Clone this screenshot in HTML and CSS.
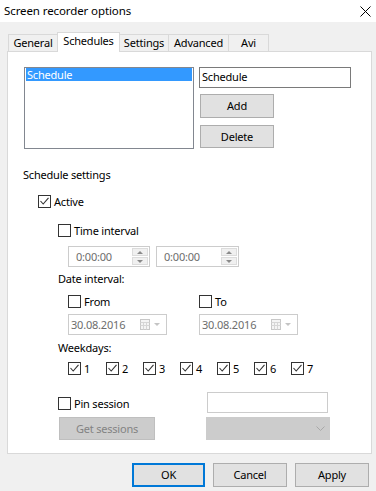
FILE: index.html
```html
<!DOCTYPE html>
<html>
<head>
<meta charset="utf-8">
<link rel="stylesheet" href="styles.css">
</head>
<body>
<div class="window">
  <div class="titlebar">
    <span class="title">Screen recorder options</span>
    <svg class="close" width="11" height="11" viewBox="0 0 11 11"><path d="M0.5 0.5 L10.5 10.5 M10.5 0.5 L0.5 10.5" stroke="#000" stroke-width="1" fill="none"/></svg>
  </div>

  <div class="tabs">
    <div class="tab t-general">General</div>
    <div class="tab active t-sched">Schedules</div>
    <div class="tab t-settings">Settings</div>
    <div class="tab t-adv">Advanced</div>
    <div class="tab t-avi">Avi</div>
  </div>

  <div class="panel">
    <div class="top">
      <div class="listbox"><div class="item sel">Schedule</div></div>
      <div class="side">
        <div class="textbox">Schedule</div>
        <div class="btn add">Add</div>
        <div class="btn del">Delete</div>
      </div>
    </div>

    <div class="label l-sched">Schedule settings</div>

    <div class="crow r-active">
      <span class="cb"><svg width="11" height="11" viewBox="0 0 11 11"><polyline points="1.5,5 4.2,8 9.5,1.8" fill="none" stroke="#333" stroke-width="1.1"/></svg></span>
      <span class="ctext">Active</span>
    </div>

    <div class="crow r-time">
      <span class="cb"></span>
      <span class="ctext">Time interval</span>
    </div>

    <div class="row r-spin">
      <div class="spin s1"><span class="val">0:00:00</span><span class="spbtns"><span class="spb up"></span><span class="spb dn"></span></span></div>
      <div class="spin s2"><span class="val">0:00:00</span><span class="spbtns"><span class="spb up"></span><span class="spb dn"></span></span></div>
    </div>

    <div class="label l-sub l-date">Date interval:</div>

    <div class="row r-fromto">
      <div class="crow-in w-from"><span class="cb"></span><span class="ctext">From</span></div>
      <div class="crow-in"><span class="cb"></span><span class="ctext">To</span></div>
    </div>

    <div class="row r-dates">
      <div class="date d1"><span class="val">30.08.2016</span><svg class="cal" width="22" height="12" viewBox="0 0 22 12"><rect x="0.5" y="0.5" width="9" height="10" fill="#f4f4f4" stroke="#c8c8c8"/><path d="M0.5 3.5 H9.5 M3.5 3.5 V10.5 M6.5 3.5 V10.5 M0.5 6.5 H9.5" stroke="#d6d6d6" fill="none"/><path d="M14 4 L20 4 L17 7 Z" fill="#c4c4c4"/></svg></div>
      <div class="date d2"><span class="val">30.08.2016</span><svg class="cal" width="22" height="12" viewBox="0 0 22 12"><rect x="0.5" y="0.5" width="9" height="10" fill="#f4f4f4" stroke="#c8c8c8"/><path d="M0.5 3.5 H9.5 M3.5 3.5 V10.5 M6.5 3.5 V10.5 M0.5 6.5 H9.5" stroke="#d6d6d6" fill="none"/><path d="M14 4 L20 4 L17 7 Z" fill="#c4c4c4"/></svg></div>
    </div>

    <div class="label l-sub l-week">Weekdays:</div>

    <div class="row r-week">
      <div class="wd"><span class="cb"><svg width="11" height="11" viewBox="0 0 11 11"><polyline points="1.5,5 4.2,8 9.5,1.8" fill="none" stroke="#333" stroke-width="1.1"/></svg></span><span class="ctext">1</span></div>
      <div class="wd"><span class="cb"><svg width="11" height="11" viewBox="0 0 11 11"><polyline points="1.5,5 4.2,8 9.5,1.8" fill="none" stroke="#333" stroke-width="1.1"/></svg></span><span class="ctext">2</span></div>
      <div class="wd"><span class="cb"><svg width="11" height="11" viewBox="0 0 11 11"><polyline points="1.5,5 4.2,8 9.5,1.8" fill="none" stroke="#333" stroke-width="1.1"/></svg></span><span class="ctext">3</span></div>
      <div class="wd"><span class="cb"><svg width="11" height="11" viewBox="0 0 11 11"><polyline points="1.5,5 4.2,8 9.5,1.8" fill="none" stroke="#333" stroke-width="1.1"/></svg></span><span class="ctext">4</span></div>
      <div class="wd"><span class="cb"><svg width="11" height="11" viewBox="0 0 11 11"><polyline points="1.5,5 4.2,8 9.5,1.8" fill="none" stroke="#333" stroke-width="1.1"/></svg></span><span class="ctext">5</span></div>
      <div class="wd"><span class="cb"><svg width="11" height="11" viewBox="0 0 11 11"><polyline points="1.5,5 4.2,8 9.5,1.8" fill="none" stroke="#333" stroke-width="1.1"/></svg></span><span class="ctext">6</span></div>
      <div class="wd"><span class="cb"><svg width="11" height="11" viewBox="0 0 11 11"><polyline points="1.5,5 4.2,8 9.5,1.8" fill="none" stroke="#333" stroke-width="1.1"/></svg></span><span class="ctext">7</span></div>
    </div>

    <div class="row r-pin">
      <div class="crow-in w-pin"><span class="cb"></span><span class="ctext">Pin session</span></div>
      <div class="pinbox"></div>
    </div>

    <div class="row r-get">
      <div class="btn disabled getbtn">Get sessions</div>
      <div class="combo"><svg width="9" height="6" viewBox="0 0 9 6"><polyline points="0.5,0.5 4.5,4.5 8.5,0.5" fill="none" stroke="#a8a8a8" stroke-width="1"/></svg></div>
    </div>
  </div>

  <div class="footer">
    <div class="btn fbtn default">OK</div>
    <div class="btn fbtn">Cancel</div>
    <div class="btn fbtn">Apply</div>
  </div>
</div>
</body>
</html>
```

FILE: styles.css
```css
* { box-sizing: border-box; }
html, body { margin: 0; padding: 0; }
body {
  width: 376px;
  height: 491px;
  background: #f0f0f0;
  font-family: "Noto Sans", "Open Sans", sans-serif;
  font-size: 11px;
  letter-spacing: -0.2px;
  color: #000;
  overflow: hidden;
}
.window { width: 376px; height: 491px; }

.titlebar {
  height: 22px;
  background: #fff;
  display: flex;
  align-items: center;
  justify-content: space-between;
  padding: 0 5px 0 4px;
}
.title { font-size: 11.5px; letter-spacing: -0.1px; line-height: 16px; }
.close { display: block; margin-top: 1px; }

.tabs {
  display: flex;
  align-items: flex-end;
  height: 20px;
  margin: 10px 0 -1px 8px;
  position: relative;
  z-index: 1;
}
.tab {
  height: 17px;
  margin-bottom: 1px;
  border-top: 1px solid #d9d9d9;
  border-right: 1px solid #d9d9d9;
  background: #f0f0f0;
  display: flex;
  align-items: center;
  justify-content: center;
  line-height: 14px;
}
.t-general { width: 50px; border-left: 1px solid #d9d9d9; }
.tab.active {
  height: 20px;
  margin-bottom: 0;
  margin-left: -1px;
  background: #fff;
  border-left: 1px solid #d9d9d9;
  padding-bottom: 3px;
}
.t-sched { width: 63px; }
.t-settings { width: 49px; }
.t-adv { width: 60px; }
.t-avi { width: 40px; }

.panel {
  margin-left: 7px;
  width: 365px;
  height: 403px;
  background: #fff;
  border: 1px solid #d9d9d9;
}

.top { display: flex; margin: 15px 0 0 16px; }
.listbox {
  width: 170px;
  height: 82px;
  border: 1px solid #828790;
  padding: 0 1px;
  background: #fff;
}
.item { height: 13px; line-height: 13px; padding-left: 1px; }
.item.sel { background: #3399ff; color: #fff; }
.side { margin-left: 5px; display: flex; flex-direction: column; align-items: flex-start; }
.textbox {
  width: 152px;
  height: 21px;
  border: 1px solid #7a7a7a;
  padding-left: 2px;
  line-height: 18px;
}
.btn {
  background: #e1e1e1;
  border: 1px solid #adadad;
  display: flex;
  align-items: center;
  justify-content: center;
  line-height: 14px;
}
.add { margin: 6px 0 0 1px; width: 74px; height: 24px; }
.del { margin: 7px 0 0 1px; width: 74px; height: 23px; }

.label { line-height: 16px; height: 16px; }
.l-sched { margin: 18px 0 0 15px; }
.l-sub { margin-left: 50px; }
.l-date { margin-top: 4px; }
.l-week { margin-top: 5px; }

.cb {
  width: 13px;
  height: 13px;
  border: 1px solid #333;
  background: #fff;
  display: flex;
  align-items: center;
  justify-content: center;
  flex: none;
}
.cb svg { display: block; }
.ctext { margin-left: 3px; line-height: 13px; }
.crow, .crow-in, .wd { display: flex; align-items: center; height: 13px; }
.r-active { margin: 12px 0 0 30px; }
.r-time { margin: 16px 0 0 50px; }

.row { display: flex; }
.r-spin { margin: 9px 0 0 60px; gap: 6px; }
.spin, .date {
  height: 21px;
  border: 1px solid #cccccc;
  display: flex;
  align-items: center;
  color: #6d6d6d;
  background: #fff;
}
.spin .val { margin-left: 7px; }
.s1 { width: 82px; }
.s2 { width: 83px; }
.spbtns {
  margin-left: auto;
  margin-right: 1px;
  width: 16px;
  display: flex;
  flex-direction: column;
  gap: 1px;
}
.spb {
  height: 8px;
  background: #f0f0f0;
  border: 1px solid #dcdcdc;
  display: flex;
  align-items: center;
  justify-content: center;
}
.spb::after {
  content: "";
  width: 0; height: 0;
  border-left: 3px solid transparent;
  border-right: 3px solid transparent;
}
.spb.up::after { border-bottom: 3px solid #8a8a8a; }
.spb.dn::after { border-top: 3px solid #8a8a8a; }

.r-fromto { margin: 8px 0 0 60px; }
.w-from { width: 131px; }

.r-dates { margin: 6px 0 0 60px; gap: 32px; }
.date { width: 99px; padding-left: 2px; }
.date .cal { margin-left: auto; margin-right: 4px; display: block; }

.r-week { margin: 6px 0 0 60px; align-items: center; }
.wd { width: 37px; }
.wd:first-child { width: 38px; }

.r-pin { margin: 17px 0 0 50px; align-items: flex-start; }
.w-pin { width: 149px; margin-top: 5px; }
.pinbox { width: 121px; height: 21px; border: 1px solid #cccccc; background: #fff; }

.r-get { margin: 4px 0 0 51px; gap: 51px; }
.btn.disabled { background: #cccccc; border-color: #bfbfbf; color: #838383; }
.getbtn { width: 96px; height: 23px; }
.combo {
  width: 124px;
  height: 23px;
  background: #cccccc;
  border: 1px solid #cccccc;
  display: flex;
  align-items: center;
  justify-content: flex-end;
  padding-right: 4px;
}
.combo svg { display: block; }

.footer {
  display: flex;
  justify-content: flex-end;
  margin-top: 9px;
  padding-right: 7px;
  gap: 8px;
}
.fbtn { width: 74px; height: 24px; }
.fbtn.default { width: 73px; border: 2px solid #0078d7; }
```
